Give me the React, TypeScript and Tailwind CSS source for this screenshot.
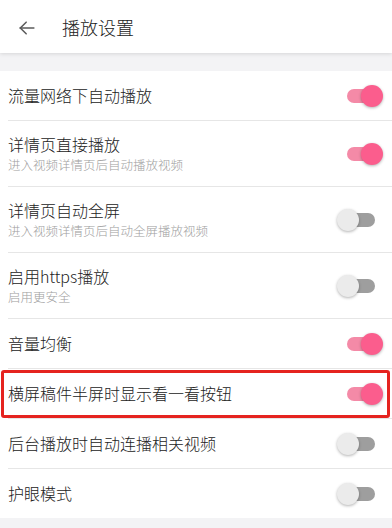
import React from "react";

type Item = { title: string; sub?: string; on: boolean; highlight?: boolean };

const items: Item[] = [
  { title: "流量网络下自动播放", on: true },
  { title: "详情页直接播放", sub: "进入视频详情页后自动播放视频", on: true },
  { title: "详情页自动全屏", sub: "进入视频详情页后自动全屏播放视频", on: false },
  { title: "启用https播放", sub: "启用更安全", on: false },
  { title: "音量均衡", on: true },
  { title: "横屏稿件半屏时显示看一看按钮", on: true, highlight: true },
  { title: "后台播放时自动连播相关视频", on: false },
  { title: "护眼模式", on: false },
];

function Toggle({ on }: { on: boolean }) {
  return (
    <div className="relative w-[46px] h-[22px] flex items-center">
      <div
        className={
          on
            ? "absolute left-[10px] w-[30px] h-[14px] rounded-full bg-[#f48aa7]"
            : "absolute left-[8px] w-[30px] h-[14px] rounded-full bg-[#9e9e9e]"
        }
      />
      <div
        className={
          on
            ? "absolute right-0 w-[22px] h-[22px] rounded-full bg-[#fb5d8d] shadow-[0_1px_3px_rgba(0,0,0,0.3)]"
            : "absolute left-0 w-[22px] h-[22px] rounded-full bg-[#ebebeb] shadow-[0_1px_3px_rgba(0,0,0,0.3)]"
        }
      />
    </div>
  );
}

export default function App() {
  return (
    <div
      className="w-[392px] h-[528px] bg-[#f3f3f5] overflow-hidden font-light"
      style={{ fontFamily: '"Noto Sans CJK SC", "Noto Sans", sans-serif' }}
    >
      <div className="relative z-10 h-[53px] bg-white flex items-center shadow-[0_1px_4px_rgba(0,0,0,0.12)]">
        <div className="w-[62px] flex items-center pl-[17px] pt-[2px]">
          <svg width="20" height="20" viewBox="0 0 24 24" fill="none" stroke="#5a5a5a" strokeWidth="1.8" strokeLinecap="square">
            <path d="M20 12H4" />
            <path d="M11 5l-7 7 7 7" strokeLinecap="round" strokeLinejoin="miter" />
          </svg>
        </div>
        <span className="text-[18px] text-[#212121] leading-none">播放设置</span>
      </div>
      <div className="h-[18px]" />
      <div className="bg-white">
        {items.map((it, i) => (
          <div key={i} className="relative">
            {i > 0 && <div className="ml-[8px] h-px bg-[#e6e6e6]" />}
            <div
              className={
                it.sub
                  ? "h-[65px] flex items-center pl-[8px] pr-[9px]"
                  : "h-[49px] flex items-center pl-[8px] pr-[9px]"
              }
            >
              <div className="flex-1 flex flex-col">
                <span className="text-[16px] leading-[19px] text-[#222]">{it.title}</span>
                {it.sub && (
                  <span className="text-[12.5px] leading-[15px] text-[#a0a0a0] mt-[3px]">{it.sub}</span>
                )}
              </div>
              <Toggle on={it.on} />
            </div>
            {it.highlight && (
              <div className="absolute left-[1px] right-[2px] top-[2px] bottom-0 border-[3px] border-[#e5231f] rounded-[3px]" />
            )}
          </div>
        ))}
      </div>
    </div>
  );
}
